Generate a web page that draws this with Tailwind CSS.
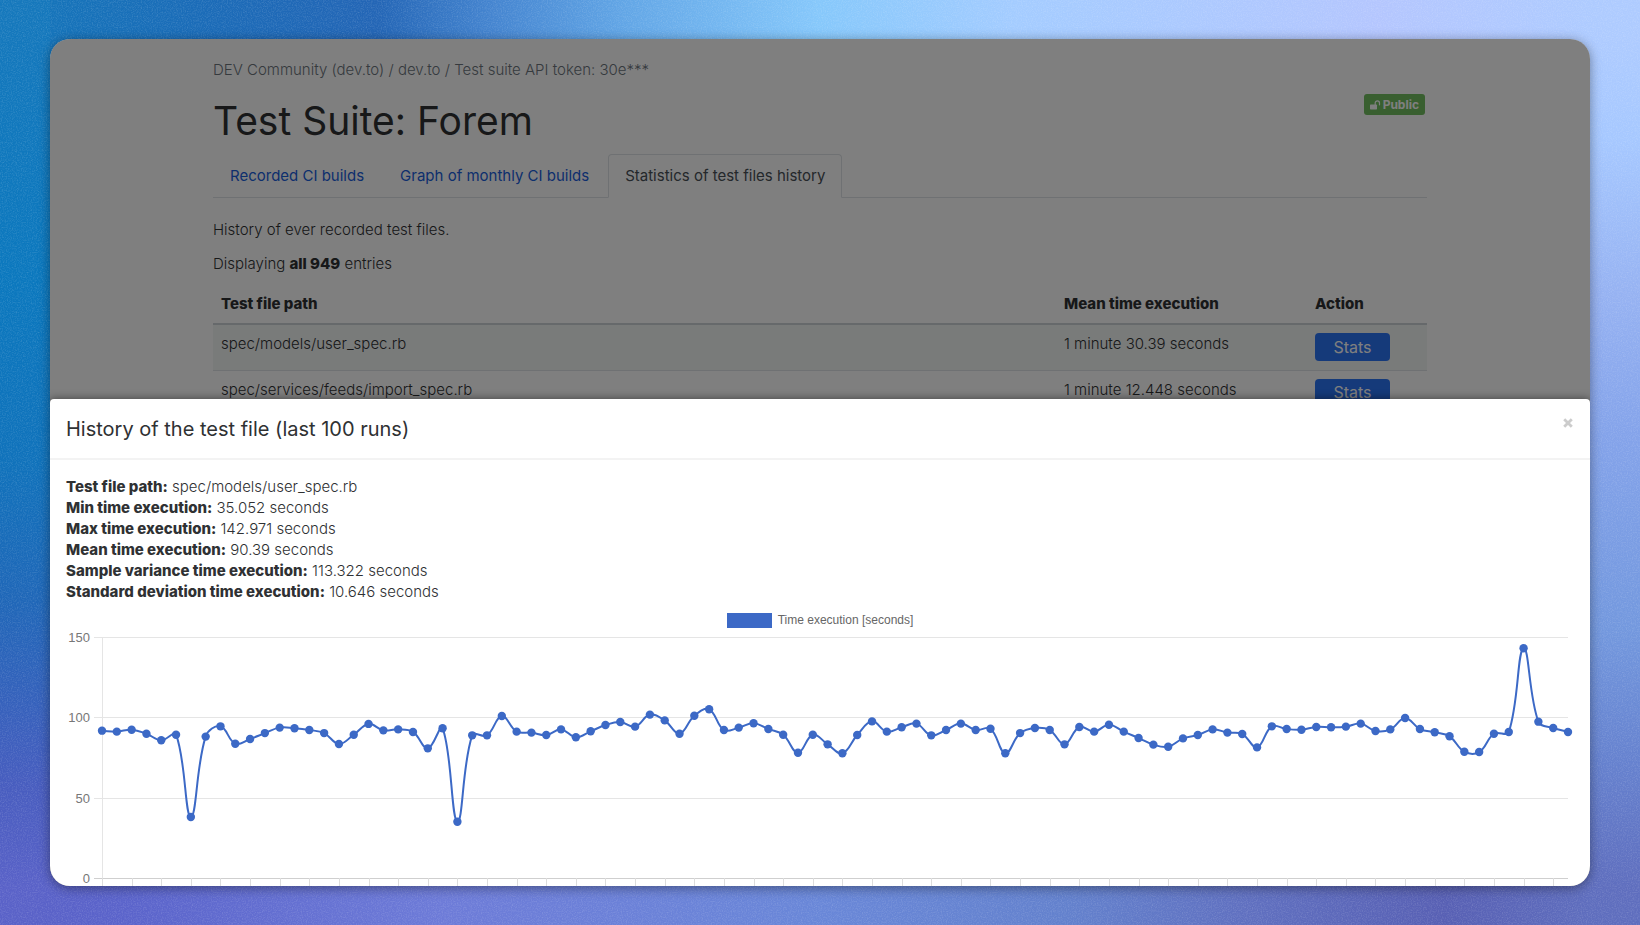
<!DOCTYPE html>
<html lang="en">
<head>
<meta charset="utf-8">
<meta name="viewport" content="width=device-width, initial-scale=1">
<title>Test Suite: Forem</title>
<script src="https://cdn.jsdelivr.net/npm/@tailwindcss/browser@4"></script>
</head>
<body class="relative isolate h-screen overflow-hidden px-[50px] py-[39px] font-[Inter,sans-serif] text-[15px] leading-[21px] font-light text-[#2f3133] bg-[#7f9fe4]">

<!-- Grainy gradient wallpaper -->
<svg class="absolute inset-0 -z-10 size-full" viewBox="0 0 1640 925" preserveAspectRatio="none" aria-hidden="true">
  <defs>
    <filter id="grain" x="0" y="0" width="100%" height="100%">
      <feTurbulence type="fractalNoise" baseFrequency="0.8" numOctaves="2" seed="4"/>
      <feColorMatrix values="0 0 0 0 1  0 0 0 0 1  0 0 0 0 1  1.2 0 0 0 -0.5"/>
    </filter>
    <linearGradient id="top" x1="0" x2="1">
      <stop offset="0" stop-color="#1678bc"/><stop offset=".03" stop-color="#1674ba"/><stop offset=".12" stop-color="#1b6cb8"/><stop offset=".23" stop-color="#2466b6"/>
      <stop offset=".3" stop-color="#4585d0"/><stop offset=".38" stop-color="#62a6e6"/><stop offset=".5" stop-color="#86c8fb"/>
      <stop offset=".62" stop-color="#a4ccff"/><stop offset=".84" stop-color="#b4c6fe"/><stop offset=".97" stop-color="#aecbff"/>
    </linearGradient>
    <linearGradient id="bottom" x1="0" x2="1">
      <stop offset=".03" stop-color="#5a62c8"/><stop offset=".08" stop-color="#5b64cb"/><stop offset=".27" stop-color="#6d7bd8"/>
      <stop offset=".5" stop-color="#6987d8"/><stop offset=".65" stop-color="#6381cd"/><stop offset=".76" stop-color="#6070c0"/>
      <stop offset=".88" stop-color="#5860b4"/><stop offset=".97" stop-color="#5f6ebe"/>
    </linearGradient>
    <linearGradient id="left" x1="0" x2="0" y1="0" y2="1">
      <stop offset="0" stop-color="#1678bc"/><stop offset=".3" stop-color="#0b78be"/><stop offset=".5" stop-color="#1072bb"/>
      <stop offset=".65" stop-color="#2067b8"/><stop offset=".85" stop-color="#485dbf"/><stop offset=".96" stop-color="#5a62c8"/>
    </linearGradient>
    <linearGradient id="right" x1="0" x2="0" y1="0" y2="1">
      <stop offset=".04" stop-color="#aecbff"/><stop offset=".15" stop-color="#a6c8ff"/><stop offset=".32" stop-color="#96b2f2"/>
      <stop offset=".47" stop-color="#84a3ea"/><stop offset=".68" stop-color="#7398de"/><stop offset=".82" stop-color="#6682cf"/>
      <stop offset=".96" stop-color="#5f6ebe"/>
    </linearGradient>
  </defs>
  <rect width="1640" height="500" fill="url(#top)"/>
  <rect y="500" width="1640" height="425" fill="url(#bottom)"/>
  <rect width="50" height="925" fill="url(#left)"/>
  <rect x="1590" width="50" height="925" fill="url(#right)"/>
  <rect width="1640" height="925" filter="url(#grain)" opacity=".25"/>
</svg>

<div class="relative h-full overflow-hidden rounded-[20px] bg-white shadow-[0_2px_12px_rgba(0,0,0,0.4)]">

  <main class="mx-auto w-full max-w-[1214px] pt-5">
    <p class="text-[#6c757d]">DEV Community (dev.to) / dev.to / Test suite API token: 30e***</p>

    <header class="mt-[14px] flex items-start justify-between">
      <h1 class="mt-1 text-[39px] leading-[46px] font-normal">Test Suite: Forem</h1>
      <span class="mr-[2px] flex h-[21px] items-center gap-[2px] rounded-[3px] bg-[#72be60] px-[6px] text-[12px] leading-[20px] font-bold text-white">
        <svg class="h-[10px] w-[11px]" viewBox="0 0 11 10" aria-hidden="true"><rect x="0" y="4.5" width="7" height="5" rx=".7" fill="currentColor"/><path d="M5.2 5V3a2.1 2.1 0 0 1 4.300 0v1.800" fill="none" stroke="currentColor" stroke-width="1.200" stroke-linecap="round"/></svg>
        Public
      </span>
    </header>

    <nav class="mt-[10px] flex border-b border-[#dee2e6] leading-[26px] font-normal">
      <a href="#builds" class="-mb-px border border-transparent px-4 py-2 text-[#1a5edb]">Recorded CI builds</a>
      <a href="#graph" class="-mb-px ml-[2px] border border-transparent px-4 py-2 text-[#1a5edb]">Graph of monthly CI builds</a>
      <a href="#stats" aria-current="page" class="-mb-px ml-[2px] rounded-t-[4px] border border-[#dee2e6] border-b-white bg-white px-4 py-2 text-[#495057]">Statistics of test files history</a>
    </nav>

    <p class="mt-[21px]">History of ever recorded test files.</p>
    <p class="mt-[13px]">Displaying <b class="font-extrabold">all 949</b> entries</p>

    <table class="mt-[10px] w-full table-fixed border-collapse text-left">
      <colgroup><col><col class="w-[251px]"><col class="w-[120px]"></colgroup>
      <thead>
        <tr class="h-[40px] border-b-2 border-[#cdd2d6] font-extrabold">
          <th class="px-2 font-extrabold">Test file path</th><th class="px-2 font-extrabold">Mean time execution</th><th class="px-2 font-extrabold">Action</th>
        </tr>
      </thead>
      <tbody>
        <tr class="h-[46px] border-b border-[#dee2e6] bg-[#f3f6f5] align-top">
          <td class="px-2 pt-2">spec/models/user_spec.rb</td><td class="px-2 pt-2">1 minute 30.39 seconds</td>
          <td class="px-2 pt-2"><button type="button" class="block h-[28px] w-[75px] rounded-[4px] bg-[#2b74f4] text-[16px] font-normal text-white">Stats</button></td>
        </tr>
        <tr class="h-[46px] align-top">
          <td class="px-2 pt-2">spec/services/feeds/import_spec.rb</td><td class="px-2 pt-2">1 minute 12.448 seconds</td>
          <td class="px-2 pt-2"><button type="button" class="block h-[28px] w-[75px] rounded-[4px] bg-[#2b74f4] text-[16px] font-normal text-white">Stats</button></td>
        </tr>
      </tbody>
    </table>
  </main>

  <!-- Modal over the dimmed page -->
  <div class="absolute inset-0 flex flex-col bg-black/50 pt-[360px]">
    <section role="dialog" aria-labelledby="modal-title" class="flex-1 overflow-hidden rounded-t-[4px] bg-white shadow-[0_0_8px_rgba(0,0,0,0.5)]">
      <header class="flex items-start justify-between border-b-2 border-[#f3f3f3] px-4 pt-[15px] pb-[14px]">
        <h2 id="modal-title" class="text-[20px] leading-[30px] font-normal">History of the test file (last 100 runs)</h2>
        <button type="button" aria-label="Close" class="mt-[4px] mr-[1px] text-[#cccccc]">
          <svg class="size-[10px]" viewBox="0 0 10 10" aria-hidden="true"><path d="M2.200 2.200l5.600 5.600M7.800 2.200L2.200 7.800" stroke="currentColor" stroke-width="2.800" stroke-linecap="square"/></svg>
        </button>
      </header>
      <div class="px-4 pt-4">
        <ul class="[&_b]:font-extrabold leading-[21px]">
          <li><b>Test file path:</b> spec/models/user_spec.rb</li>
          <li><b>Min time execution:</b> 35.052 seconds</li>
          <li><b>Max time execution:</b> 142.971 seconds</li>
          <li><b>Mean time execution:</b> 90.39 seconds</li>
          <li><b>Sample variance time execution:</b> 113.322 seconds</li>
          <li><b>Standard deviation time execution:</b> 10.646 seconds</li>
        </ul>
        <div class="mt-[11px] flex items-center justify-center gap-[6px] font-['Liberation_Sans',sans-serif] text-[12px] leading-[15px] font-normal text-[#666666]">
          <span class="h-[15px] w-[45px] bg-[#3c69c6]"></span>Time execution [seconds]
        </div>
        <svg id="chart" class="block h-[290px] w-full" role="img" aria-label="Time execution in seconds"></svg>
      </div>
    </section>
  </div>
</div>

<script>
const values = [91.700,91.100,92.300,89.800,85.700,89.200,38,88,94.400,83.600,86.500,90.200,93.600,93.200,92.100,90.200,83.400,89.200,95.900,91.900,92.500,90.900,80.700,93.200,
35.052,88.800,88.800,100.800,91.100,90.500,89,92.500,87.600,91.300,95.200,97.100,94.200,101.700,98.100,89.800,101,105,92.100,93.600,96.300,92.700,89.200,78,89.200,83.200,
77.600,89,97.500,91.100,93.800,96.100,88.800,92.100,96.100,92.100,92.900,77.600,90.200,93.400,92.100,83.200,94,91.100,95.400,91.100,87.100,83,81.700,86.900,89,92.500,
90.500,89.600,81.300,94.400,92.700,92.300,94,93.800,94.200,96.100,91.500,92.500,99.600,92.700,90.700,88.200,78.600,78.400,89.800,90.900,142.971,97.300,93.400,90.900];
const svg = document.getElementById('chart');
const left = 36, right = 6, top0 = 9, unit = 241 / 150;

function draw() {
  const w = svg.getBoundingClientRect().width, step = (w - left - right) / (values.length - 1);
  const y = v => top0 + (150 - v) * unit;
  const p = values.map((v, i) => [left + i * step, y(v)]);
  let out = '';
  for (const v of [150, 100, 50, 0]) {
    const gy = Math.round(y(v)) + .5;
    out += `<path d="M${left - 8} ${gy}H${w - right}" stroke="${v ? '#e5e5e5' : '#cfcfcf'}"/>`;
    out += `<text x="${left - 12}" y="${gy + 4}" text-anchor="end" class="font-['Liberation_Sans',sans-serif] text-[13px] font-normal" fill="#777777">${v}</text>`;
  }
  out += `<path d="M${left + .5} ${top0}V${y(0)}" stroke="#e5e5e5"/>`;
  for (let i = 0; i < 99; i += 2) out += `<path d="M${Math.round(p[i][0]) + .5} ${y(0)}v20" stroke="#dddddd"/>`;

  // Control points follow neighbouring slopes, as a tension 0.4 spline
  const dist = (a, b) => Math.hypot(a[0] - b[0], a[1] - b[1]);
  const ctl = p.map((c, i) => {
    const a = p[i - 1] || c, b = p[i + 1] || c, d0 = dist(a, c), d1 = dist(c, b);
    const f0 = .4 * d0 / (d0 + d1), f1 = .4 * d1 / (d0 + d1);
    return [[c[0] - f0 * (b[0] - a[0]), c[1] - f0 * (b[1] - a[1])], [c[0] + f1 * (b[0] - a[0]), c[1] + f1 * (b[1] - a[1])]];
  });
  let d = `M${p[0]}`;
  for (let i = 1; i < p.length; i++) d += `C${ctl[i - 1][1]} ${ctl[i][0]} ${p[i]}`;
  out += `<path d="${d}" fill="none" stroke="#3c69c6" stroke-width="2"/>`;
  for (const c of p) out += `<circle cx="${c[0]}" cy="${c[1]}" r="4.200" fill="#3c69c6"/>`;
  svg.innerHTML = out;
}
// Redraw whenever the width of the dialog body changes
new ResizeObserver(draw).observe(svg.parentElement);
addEventListener('load', draw);
</script>
</body>
</html>
